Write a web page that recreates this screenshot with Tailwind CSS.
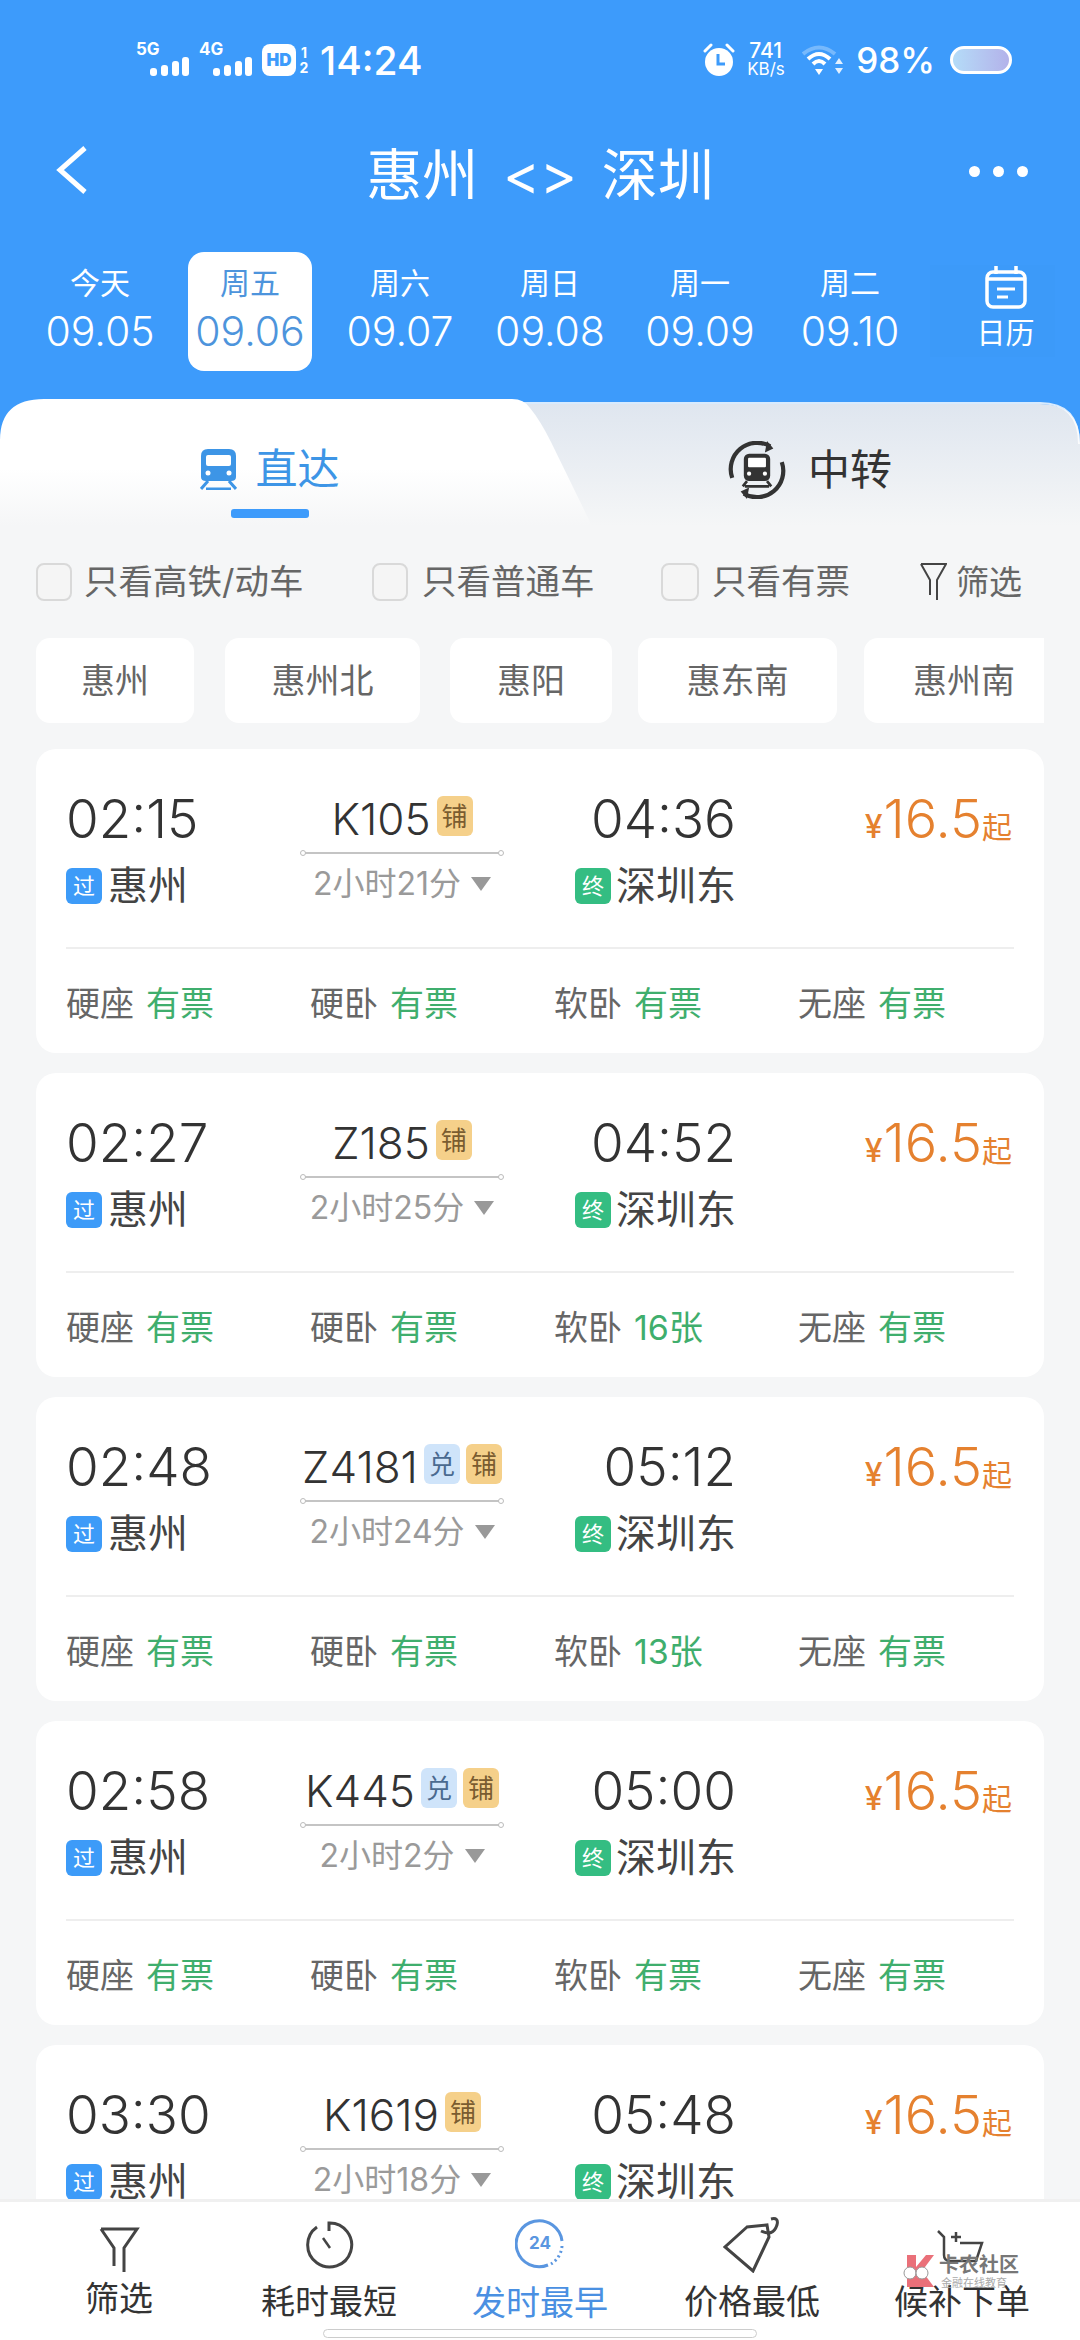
<!DOCTYPE html>
<html lang="zh-CN">
<head>
    <meta charset="UTF-8">
    <meta name="viewport" content="width=device-width, initial-scale=1.0">
    <title>惠州 - 深圳</title>
    <script src="https://cdn.jsdelivr.net/npm/@tailwindcss/browser@4"></script>
</head>
<body class="w-[1080px] h-[2340px] overflow-hidden flex flex-col bg-[#f5f6f7] text-[#333] font-[Inter,'Noto_Sans_CJK_SC',sans-serif]">
    <!-- Blue header -->
    <header class="h-[398px] shrink-0 bg-[#3d9bfb] text-white flex flex-col">
        <!-- Status bar -->
        <div class="h-[120px] pl-[136px] pr-[68px] flex items-center justify-between">
            <div class="flex items-center">
                <div class="relative w-[54px] h-[36px]">
                    <span class="absolute left-0 -top-[2px] text-[17px] leading-[18px] font-bold">5G</span>
                    <svg class="absolute left-[14px] top-[15px]" width="40" height="19" fill="#fff"><rect x="0" y="11" width="7" height="8" rx="3"/><rect x="11" y="8" width="7" height="11" rx="3"/><rect x="22" y="4" width="7" height="15" rx="3"/><rect x="32" y="0" width="7" height="19" rx="3"/></svg>
                </div>
                <div class="relative w-[54px] h-[36px] ml-[9px]">
                    <span class="absolute left-0 -top-[2px] text-[17px] leading-[18px] font-bold">4G</span>
                    <svg class="absolute left-[14px] top-[15px]" width="40" height="19" fill="#fff"><rect x="0" y="11" width="7" height="8" rx="3"/><rect x="11" y="8" width="7" height="11" rx="3"/><rect x="22" y="4" width="7" height="15" rx="3"/><rect x="32" y="0" width="7" height="19" rx="3"/></svg>
                </div>
                <span class="ml-[9px] w-[34px] h-[32px] rounded-[8px] bg-white text-[#3d9bfb] text-[17px] leading-[32px] font-black text-center">HD</span>
                <div class="ml-[3px] w-[10px] flex flex-col items-center text-[14px] leading-[15px] font-bold"><span>1</span><span>2</span></div>
                <span class="ml-[11px] text-[39px] leading-none font-medium">14:24</span>
            </div>
            <div class="flex items-center">
                <svg width="32" height="36" viewBox="0 0 32 36"><path d="M2 9 L8 3 M30 9 L24 3" stroke="#fff" stroke-width="3" stroke-linecap="round"/><circle cx="16" cy="20" r="14" fill="#fff"/><path d="M15 12 V22 H22" stroke="#3d9bfb" stroke-width="3" fill="none"/></svg>
                <div class="ml-[12px] w-[46px] flex flex-col leading-[18px]">
                    <span class="text-[21px] font-medium pl-[2px]">741</span>
                    <span class="text-[17px]">KB/s</span>
                </div>
                <svg class="ml-[9px]" width="42" height="32" viewBox="0 0 42 32" fill="none"><path d="M1 10 Q17 -3 33 10" stroke="#fff" stroke-opacity=".3" stroke-width="4"/><path d="M6 15 Q17 5 28 15" stroke="#fff" stroke-width="4"/><path d="M11 20 Q17 14 23 20" stroke="#fff" stroke-width="4"/><path d="M13 25 H21 L17 31 Z" fill="#fff"/><path d="M33 20 L37 14 L41 20 Z M33 24 L37 30 L41 24 Z" fill="#fff" fill-opacity=".85"/></svg>
                <span class="ml-[12px] text-[35px] leading-none font-medium">98%</span>
                <div class="ml-[15px] w-[62px] h-[28px] rounded-full border-[3px] border-white bg-gradient-to-r from-[#b4dcf8] to-[#b3b2ea]"></div>
            </div>
        </div>
        <!-- Title -->
        <div class="relative h-[104px] flex items-center justify-center">
            <svg class="absolute left-[54px] top-[25px]" width="36" height="50" fill="none" stroke="#fff" stroke-width="5"><path d="M31 3 L6 25 L31 47"/></svg>
            <span class="text-[56px] leading-none mt-[6px] font-normal [word-spacing:9px]">惠州 &lt;&gt; 深圳</span>
            <div class="absolute right-[52px] top-[46px] flex gap-[13px]">
                <span class="w-[11px] h-[11px] rounded-full bg-white"></span>
                <span class="w-[11px] h-[11px] rounded-full bg-white"></span>
                <span class="w-[11px] h-[11px] rounded-full bg-white"></span>
            </div>
        </div>
        <!-- Dates -->
        <div class="relative h-[119px] mt-[28px] pl-[25px] flex" id="days"></div>
    </header>

    <!-- Tabs -->
    <section class="relative h-[150px] shrink-0">
        <svg class="absolute left-0 top-0" width="1080" height="150">
            <defs>
                <linearGradient id="tabOff" x1="0" y1="0" x2="0" y2="1"><stop offset="0" stop-color="#dfe6ef"/><stop offset="1" stop-color="#f5f6f7"/></linearGradient>
                <linearGradient id="tabOn" x1="0" y1="0" x2="0" y2="1"><stop offset="0" stop-color="#fff"/><stop offset=".55" stop-color="#fff"/><stop offset="1" stop-color="#f5f6f7"/></linearGradient>
            </defs>
            <rect width="1080" height="60" fill="#3d9bfb"/>
            <path d="M500 6 H1040 Q1080 6 1080 46 V128 H500 Z" fill="url(#tabOff)"/>
            <path d="M520 5 H1040 Q1079 5 1079 46" fill="none" stroke="#fff" stroke-opacity=".8" stroke-width="2"/>
            <path d="M0 42 Q0 1 44 1 H512 Q524 1 530 10 Q540 22 551 44 L592 128 H0 Z" fill="url(#tabOn)"/>
        </svg>
        <div class="relative h-full flex">
            <div class="w-[540px] flex flex-col items-center pt-[47px]">
                <div class="flex items-center gap-[18px]">
                    <svg width="37" height="42" viewBox="0 0 37 42"><path d="M8 1 H29 Q36 1 36 8 V29 Q36 33 31 33 H6 Q1 33 1 29 V8 Q1 1 8 1 Z" fill="#3d95e6"/><rect x="6" y="7" width="25" height="11" rx="2" fill="#fff"/><circle cx="8" cy="25" r="2.5" fill="#fff"/><circle cx="29" cy="25" r="2.5" fill="#fff"/><path d="M8 33 L1 41 M29 33 L36 41 M6 41 H31" stroke="#3d95e6" stroke-width="3"/></svg>
                    <span class="text-[42px] leading-[48px] text-[#3d95e6] font-normal">直达</span>
                </div>
                <span class="w-[78px] h-[9px] mt-[16px] rounded-[3px] bg-[#3d9bfb]"></span>
            </div>
            <div class="w-[540px] flex justify-center pt-[43px]">
                <div class="flex items-center gap-[22px] h-[58px]">
                    <svg width="58" height="58" viewBox="0 0 55 55" fill="none"><path d="M4 35 A25 25 0 0 1 40 5 M51 20 A25 25 0 0 1 15 50" stroke="#333" stroke-width="4"/><path d="M37 0 L43 7 L35 11 Z M18 55 L12 48 L20 44 Z" fill="#333"/><rect x="15" y="12" width="25" height="26" rx="5" fill="#333"/><rect x="19" y="16" width="17" height="9" rx="1" fill="#fff"/><circle cx="20" cy="31" r="2" fill="#fff"/><circle cx="35" cy="31" r="2" fill="#fff"/><path d="M18 38 L14 43 M37 38 L41 43 M16 43 H39" stroke="#333" stroke-width="2.5"/></svg>
                    <span class="text-[42px] leading-[48px] text-[#333] font-normal">中转</span>
                </div>
            </div>
        </div>
    </section>

    <!-- Quick filters -->
    <div class="h-[68px] shrink-0 pl-[36px] flex items-center text-[34.5px] text-[#666]">
        <span class="w-[36px] h-[38px] rounded-[8px] border-2 border-[#d9d9d9] bg-[#f5f5f5]"></span>
        <span class="ml-[12px] w-[288px] leading-[40px]">只看高铁/动车</span>
        <span class="w-[36px] h-[38px] rounded-[8px] border-2 border-[#d9d9d9] bg-[#f5f5f5]"></span>
        <span class="ml-[14px] w-[239px] leading-[40px]">只看普通车</span>
        <span class="w-[38px] h-[38px] rounded-[8px] border-2 border-[#d9d9d9] bg-[#f5f5f5]"></span>
        <span class="ml-[13px] w-[208px] leading-[40px]">只看有票</span>
        <svg width="27" height="40" viewBox="0 0 27 40" fill="none" stroke="#444" stroke-width="2"><path d="M1 2 H26 L17 18 V38 M1 2 L10 18 V33"/></svg>
        <span class="ml-[9px] text-[33px] leading-[40px]">筛选</span>
    </div>

    <!-- Station chips -->
    <div class="mx-[36px] mt-[22px] h-[85px] shrink-0 flex overflow-hidden text-[34px] text-[#666]">
        <span class="w-[158px] shrink-0 mr-[31px] rounded-[14px] bg-white flex items-center justify-center">惠州</span>
        <span class="w-[195px] shrink-0 mr-[30px] rounded-[14px] bg-white flex items-center justify-center">惠州北</span>
        <span class="w-[162px] shrink-0 mr-[26px] rounded-[14px] bg-white flex items-center justify-center">惠阳</span>
        <span class="w-[199px] shrink-0 mr-[27px] rounded-[14px] bg-white flex items-center justify-center">惠东南</span>
        <span class="w-[200px] shrink-0 rounded-[14px] bg-white flex items-center justify-center">惠州南</span>
    </div>

    <!-- Train list -->
    <main class="flex-1 min-h-0 overflow-hidden mt-[26px] px-[36px] flex flex-col gap-[20px]" id="list"></main>

    <!-- Bottom bar -->
    <nav class="relative h-[141px] shrink-0 bg-white border-t-[3px] border-[#f0f0f0] text-[34px] text-[#333]">
        <div class="flex h-[128px]">
            <div class="w-[238px] flex flex-col items-center pt-[23px]">
                <svg width="42" height="48" viewBox="0 0 42 48" fill="none" stroke="#444" stroke-width="3"><path d="M3 4 H39 L26 23 V47 M3 4 L16 23 V41"/></svg>
                <span class="leading-[40px] mt-[6px]">筛选</span>
            </div>
            <div class="w-[182px] flex flex-col items-center pt-[16px]">
                <svg width="50" height="54" viewBox="0 0 50 54" fill="none" stroke="#444" stroke-width="3"><path d="M13 9 A22 22 0 1 0 25 5 V13"/><path d="M19 20 L26 30" stroke-width="2.5"/></svg>
                <span class="leading-[40px] mt-[10px] whitespace-nowrap">耗时最短</span>
            </div>
            <div class="w-[240px] flex flex-col items-center pt-[17px]">
                <div class="relative w-[50px] h-[50px]">
                    <svg width="50" height="50" viewBox="0 0 50 50" fill="none" stroke="#5a96e0" stroke-width="3"><path d="M33 46 A23 23 0 1 1 47 22"/><path d="M47 27 A23 23 0 0 1 36 45" stroke-dasharray="2 3"/></svg>
                    <span class="absolute inset-0 flex items-center justify-center text-[17px] font-bold text-[#5a96e0]">24</span>
                </div>
                <span class="leading-[40px] mt-[14px] whitespace-nowrap text-[#4a90e2]">发时最早</span>
            </div>
            <div class="w-[184px] flex flex-col items-center pt-[15px]">
                <svg width="58" height="56" viewBox="0 0 58 56" fill="none" stroke="#444" stroke-width="3"><path d="M24 10 L2 30 L30 54 L46 20 L44 8 Z"/><path d="M38 14 Q50 20 54 8 Q56 0 48 2"/></svg>
                <span class="leading-[40px] mt-[9px] whitespace-nowrap">价格最低</span>
            </div>
            <div class="w-[236px] flex flex-col items-center pt-[27px]">
                <svg width="52" height="34" viewBox="0 0 52 34" fill="none" stroke="#444" stroke-width="2.5"><path d="M2 2 L8 8 V26 Q8 32 14 32 H40 L46 14 H24"/><path d="M20 3 V13 M15 8 H25"/></svg>
                <span class="leading-[40px] mt-[19px] whitespace-nowrap">候补下单</span>
            </div>
        </div>
        <!-- Watermark -->
        <div class="absolute left-[903px] top-[52px] w-[120px] h-[36px]">
            <svg class="absolute left-0 top-0" width="34" height="34" viewBox="0 0 34 34"><path d="M4 1 H13 V13 L23 1 H31 L19 17 L31 33 H13 L4 33 Z" fill="#ea7079"/><circle cx="7" cy="19" r="6" fill="#fff" stroke="#999"/><circle cx="19" cy="19" r="6" fill="#fff" stroke="#999"/></svg>
            <span class="absolute left-[36px] top-0 text-[20px] leading-[22px] font-bold text-[#777] whitespace-nowrap">卡农社区</span>
            <span class="absolute left-[38px] top-[22px] text-[11px] leading-[14px] text-[#aaa] whitespace-nowrap">金融在线教育</span>
        </div>
        <div class="absolute left-[323px] top-[127px] w-[434px] h-[9px] rounded-full bg-white border border-[#ccc]"></div>
    </nav>

    <script>
        const days = [
            ['今天', '09.05'], ['周五', '09.06'], ['周六', '09.07'],
            ['周日', '09.08'], ['周一', '09.09'], ['周二', '09.10'],
        ];
        const daysEl = document.getElementById('days');
        daysEl.innerHTML = days.map((d, i) => `
            <div class="w-[150px] flex justify-center">
                <div class="w-[124px] h-[119px] rounded-[16px] flex flex-col items-center pt-[13px] ${i === 1 ? 'bg-white text-[#4d94dc]' : 'text-white'}">
                    <span class="text-[30px] leading-[36px]">${d[0]}</span>
                    <span class="text-[41px] leading-[52px] mt-[4px] font-light">${d[1]}</span>
                </div>
            </div>`).join('') + `
            <div class="ml-[5px] w-[125px] h-[92px] mt-[13px] pl-[26px] bg-[#3c9af9] flex flex-col items-center">
                <svg width="42" height="44" viewBox="0 0 42 44" fill="none" stroke="#fff" stroke-width="3.5"><rect x="2" y="7" width="38" height="35" rx="6"/><path d="M11 1 V9 M31 1 V9 M3 14 H39" /><path d="M12 24 H30 M12 32 H23" stroke-width="3"/></svg>
                <span class="text-[29px] leading-[38px] mt-[6px]">日历</span>
            </div>`;

        const trains = [
            { dep: '02:15', no: 'K105', dur: '2小时21分', arr: '04:36', soft: '有票' },
            { dep: '02:27', no: 'Z185', dur: '2小时25分', arr: '04:52', soft: '16张' },
            { dep: '02:48', no: 'Z4181', dui: true, dur: '2小时24分', arr: '05:12', soft: '13张' },
            { dep: '02:58', no: 'K445', dui: true, dur: '2小时2分', arr: '05:00', soft: '有票' },
            { dep: '03:30', no: 'K1619', dur: '2小时18分', arr: '05:48', soft: '有票' },
        ];
        const seat = (name, val) => `
            <div class="w-[244px] shrink-0 flex items-center gap-[12px]">
                <span class="text-[#666]">${name}</span><span class="text-[#3fae6d]">${val}</span>
            </div>`;
        document.getElementById('list').innerHTML = trains.map(t => `
            <article class="h-[304px] shrink-0 rounded-[20px] bg-white px-[30px] pt-[37px]">
                <div class="grid grid-cols-[235px_202px_233px_1fr] h-[125px]">
                    <div class="flex flex-col">
                        <span class="text-[53px] leading-[66px] font-light">${t.dep}</span>
                        <div class="flex items-center mt-[16px] h-[36px]">
                            <span class="w-[36px] h-[36px] rounded-[6px] bg-[#3d9bf8] text-white text-[22px] flex items-center justify-center">过</span>
                            <span class="ml-[6px] text-[40px] leading-[36px] text-[#444]">惠州</span>
                        </div>
                    </div>
                    <div class="flex flex-col items-center">
                        <div class="h-[46px] pt-[12px] flex items-start justify-center gap-[6px]">
                            <span class="text-[44px] leading-[42px] font-light whitespace-nowrap">${t.no}</span>
                            ${t.dui ? '<span class="w-[36px] h-[40px] -mt-[2px] rounded-[6px] bg-[#cfe4fa] text-[#4a6a90] text-[26px] flex items-center justify-center">兑</span>' : ''}
                            <span class="w-[36px] h-[40px] -mt-[2px] rounded-[6px] bg-[#f5d08a] text-[#7a5c30] text-[26px] flex items-center justify-center">铺</span>
                        </div>
                        <div class="relative w-[202px] h-[2px] mt-[20px] bg-[#c4c4c4]">
                            <span class="absolute -left-[1px] -top-[2px] w-[6px] h-[6px] rounded-full border border-[#bbb] bg-white"></span>
                            <span class="absolute -right-[1px] -top-[2px] w-[6px] h-[6px] rounded-full border border-[#bbb] bg-white"></span>
                        </div>
                        <div class="flex items-center gap-[10px] mt-[11px] h-[38px]">
                            <span class="text-[32px] leading-[38px] text-[#9a9a9a]">${t.dur}</span>
                            <svg width="20" height="14" fill="#999"><path d="M0 0 H20 L10 14 Z"/></svg>
                        </div>
                    </div>
                    <div class="flex flex-col items-end">
                        <span class="text-[53px] leading-[66px] font-light">${t.arr}</span>
                        <div class="flex items-center mt-[16px] h-[36px]">
                            <span class="w-[36px] h-[36px] rounded-[6px] bg-[#34bd82] text-white text-[22px] flex items-center justify-center">终</span>
                            <span class="ml-[5px] text-[40px] leading-[36px] text-[#444]">深圳东</span>
                        </div>
                    </div>
                    <div class="flex justify-end items-baseline text-[#e5812f] h-[66px] pr-[2px]">
                        <span class="text-[32px] leading-[66px] font-medium mr-[1px]">¥</span>
                        <span class="text-[54px] leading-[66px] font-light">16.5</span>
                        <span class="text-[30px] leading-[66px]">起</span>
                    </div>
                </div>
                <div class="h-[2px] mt-[36px] bg-[#eee]"></div>
                <div class="flex items-center h-[108px] text-[34px]">
                    ${seat('硬座', '有票')}${seat('硬卧', '有票')}${seat('软卧', t.soft)}${seat('无座', '有票')}
                </div>
            </article>`).join('');
    </script>
</body>
</html>
